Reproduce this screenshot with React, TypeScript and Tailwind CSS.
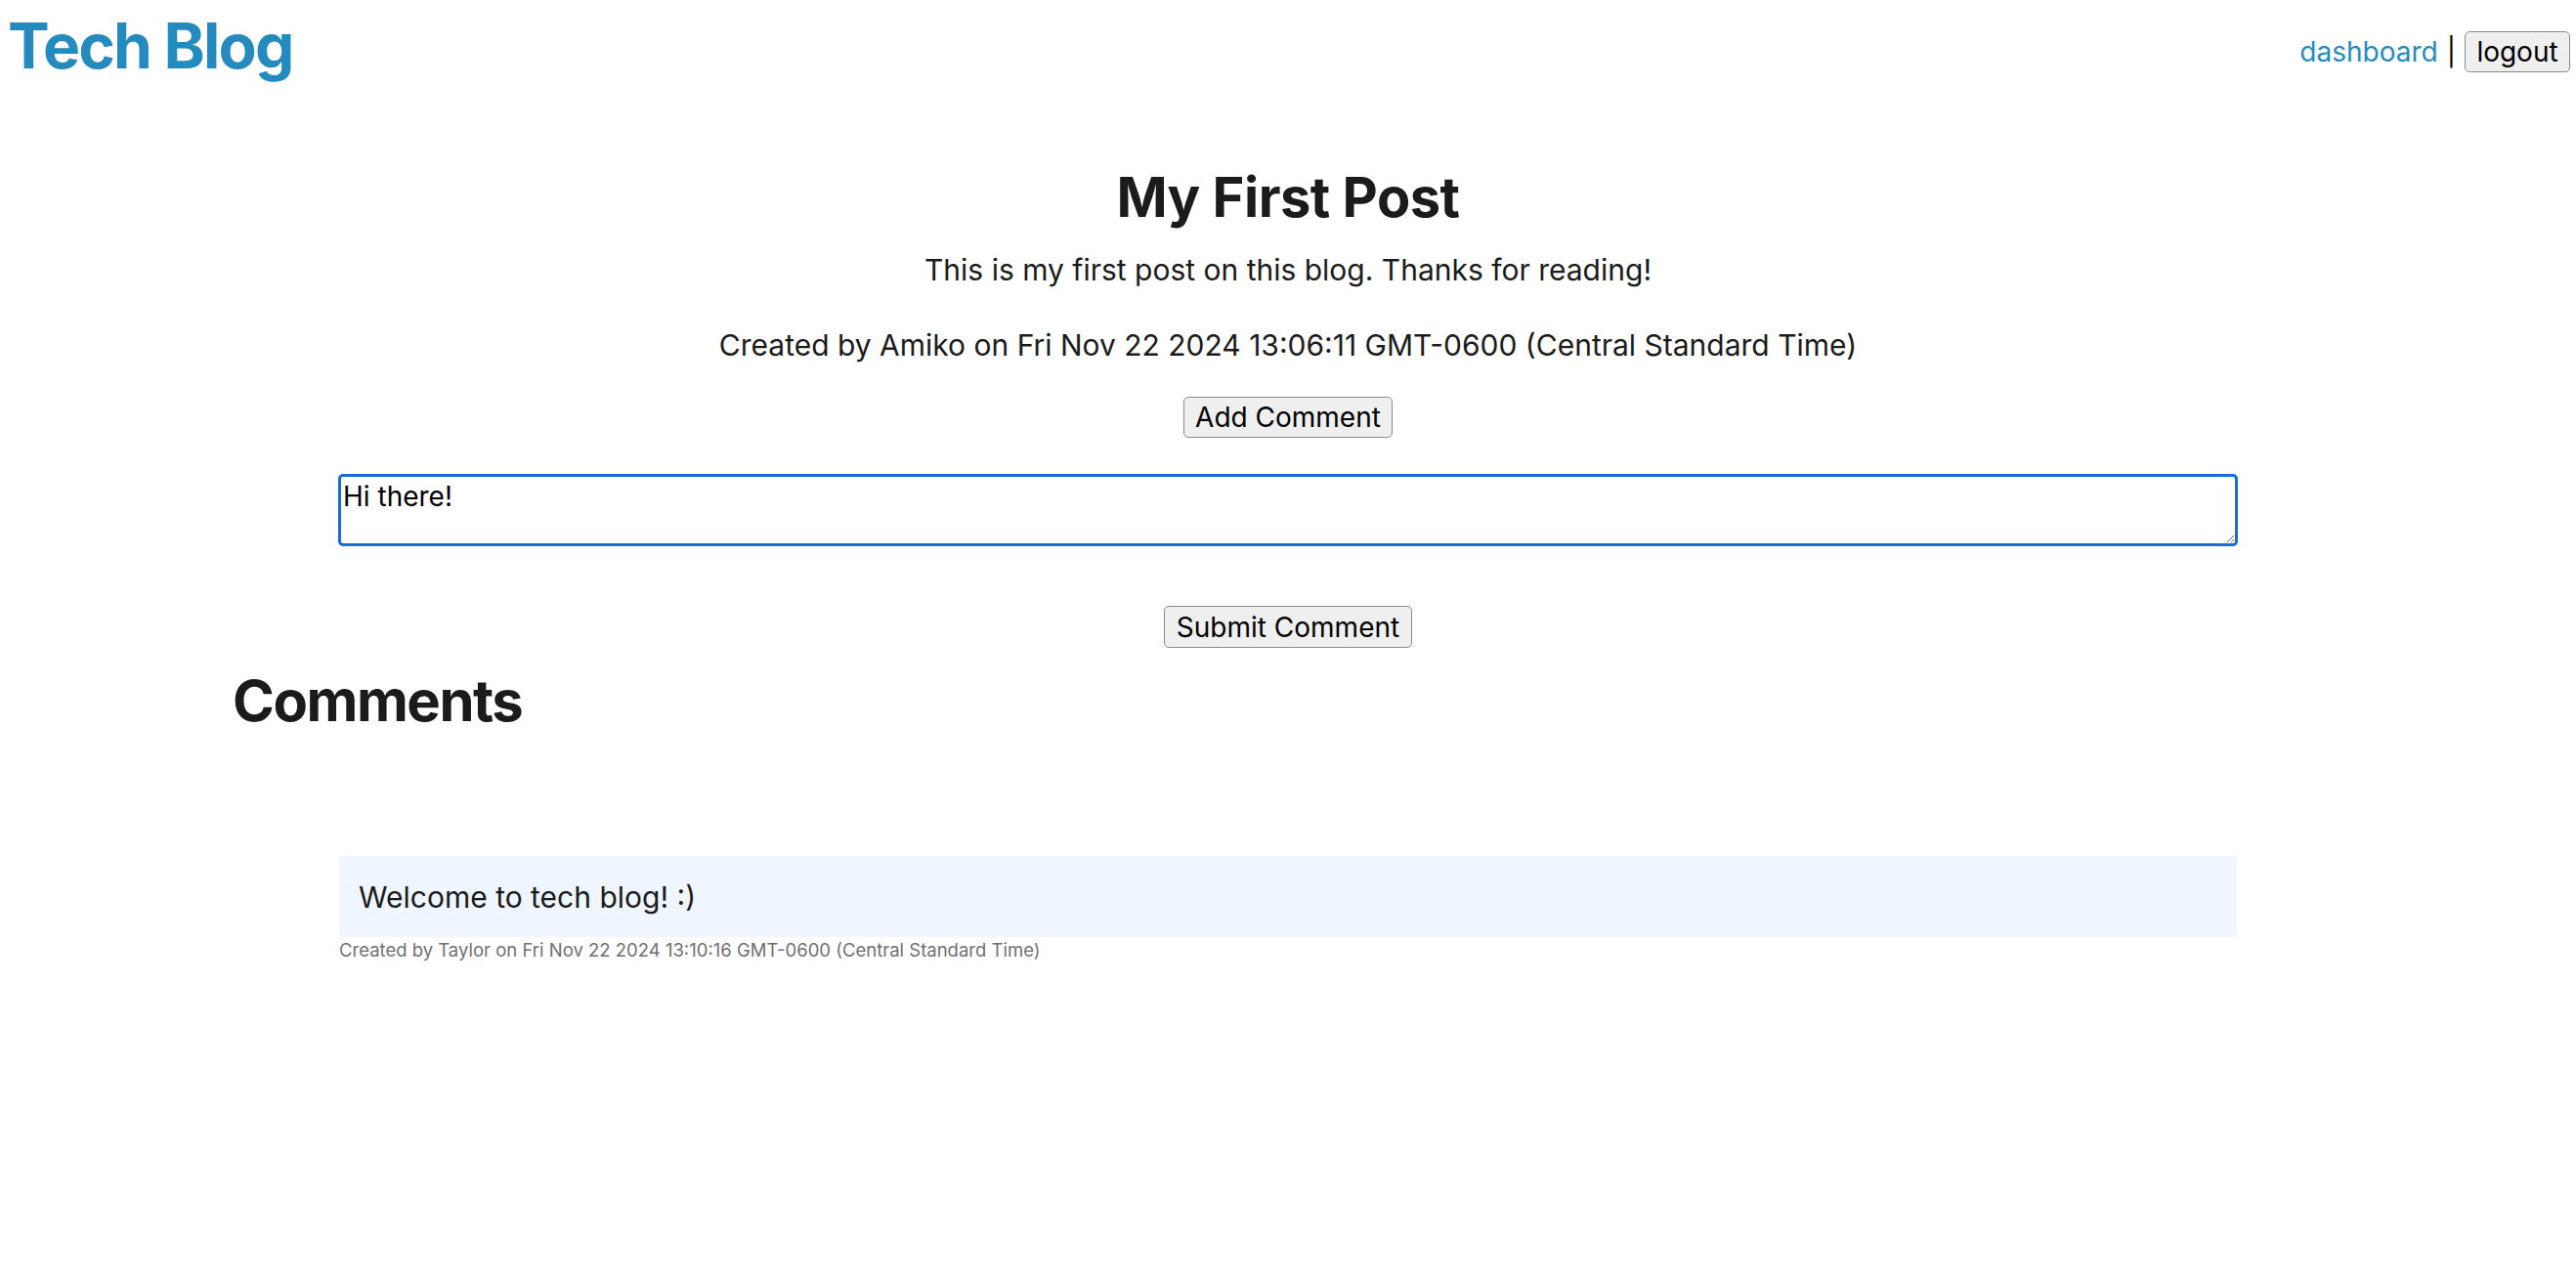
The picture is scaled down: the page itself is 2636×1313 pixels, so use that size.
import { useEffect, useRef } from 'react';

const btn =
  'h-[42px] rounded-[5px] border border-[#8a8a8a] bg-[#efefef] text-[28px] leading-none text-black';

function Header() {
  return (
    <header className="flex items-start justify-between pl-[8px] pr-[6px]">
      <h1 className="mt-[15px] text-[64px] font-bold leading-none tracking-[-1.8px] text-[#258bbf]">
        Tech Blog
      </h1>
      <nav className="mt-[32px] flex items-center text-[28px] leading-none">
        <a href="#" className="text-[#258bbf]">
          dashboard
        </a>
        <span className="mx-[9px] text-black">|</span>
        <button className={`${btn} w-[108px]`}>logout</button>
      </nav>
    </header>
  );
}

function CommentForm() {
  const ref = useRef<HTMLTextAreaElement>(null);

  useEffect(() => {
    const el = ref.current;
    if (!el) return;
    el.focus();
    el.setSelectionRange(el.value.length, el.value.length);
  }, []);

  return (
    <div className="flex flex-col items-center">
      <button className={`${btn} mt-[38px] w-[214px]`}>Add Comment</button>
      <textarea
        ref={ref}
        defaultValue="Hi there!"
        className="mt-[37px] block h-[74px] w-[1944px] rounded-[5px] border-[3px] border-[#1c6bd6] px-[2px] py-[5px] text-[28px] leading-[30px] text-black caret-black outline-none"
      />
      <button className={`${btn} mt-[61px] h-[43px] w-[254px]`}>Submit Comment</button>
    </div>
  );
}

function Comment({ body, author, date }: { body: string; author: string; date: string }) {
  return (
    <div>
      <div className="h-[83px] bg-[#eff6ff] pl-[20px] pt-[27px] text-[30px] leading-none text-[#1b1b1b]">
        {body}
      </div>
      <p className="mt-[4px] text-[18.5px] leading-none text-[#707070]">
        Created by {author} on {date}
      </p>
    </div>
  );
}

export default function App() {
  return (
    <div className="min-h-[1313px] bg-white font-['Inter','Noto_Sans',sans-serif] text-[#1b1b1b]">
      <Header />

      <main className="flex flex-col items-center">
        <h2 className="mt-[95px] text-[56px] font-bold leading-none tracking-[-0.5px]">My First Post</h2>
        <p className="mt-[31px] text-[30px] leading-none">
          This is my first post on this blog. Thanks for reading!
        </p>
        <p className="mt-[47px] text-[30px] leading-none">
          Created by Amiko on Fri Nov 22 2024 13:06:11 GMT-0600 (Central Standard Time)
        </p>
        <CommentForm />
      </main>

      <section className="mt-[25px] px-[238px]">
        <h2 className="text-[58px] font-bold leading-none tracking-[-1.5px]">Comments</h2>
        <div className="mt-[130px] px-[109px]">
          <Comment
            body="Welcome to tech blog! :)"
            author="Taylor"
            date="Fri Nov 22 2024 13:10:16 GMT-0600 (Central Standard Time)"
          />
        </div>
      </section>
    </div>
  );
}
